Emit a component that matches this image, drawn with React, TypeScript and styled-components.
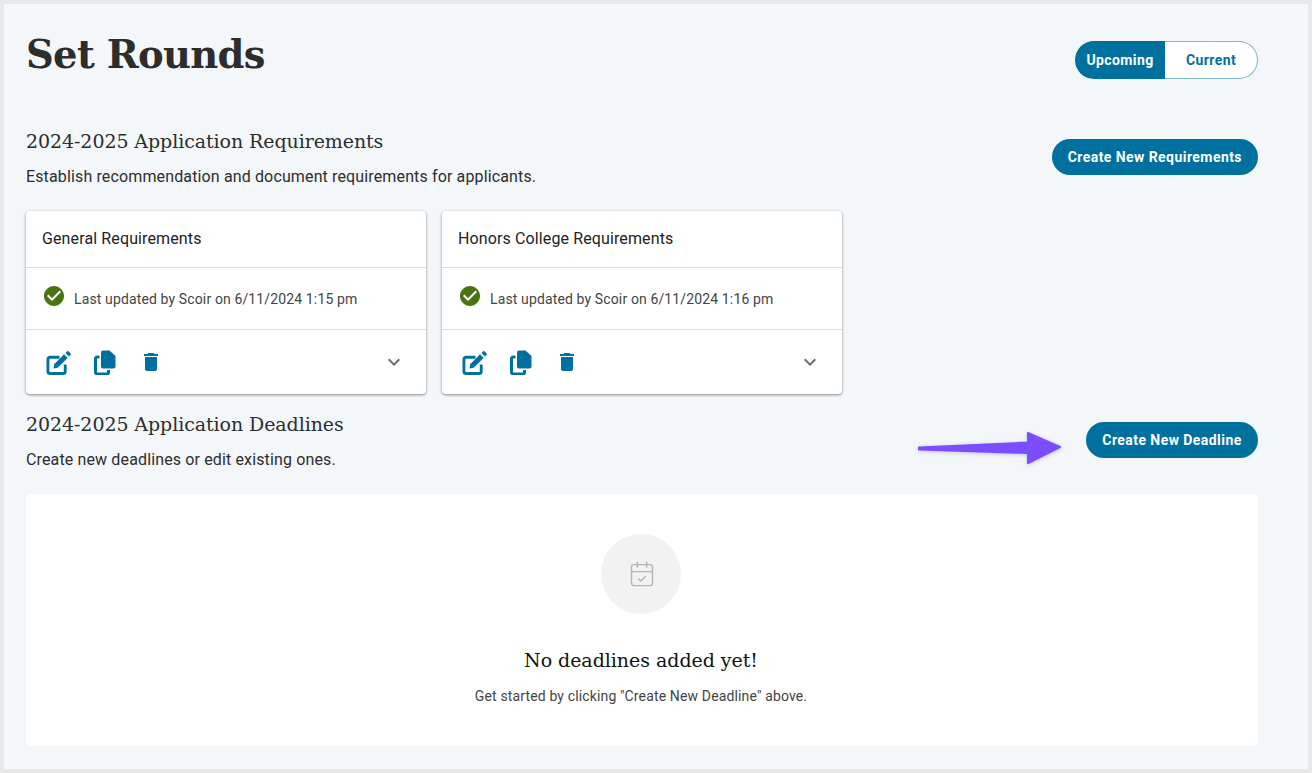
import React from 'react';
import styled, { createGlobalStyle } from 'styled-components';
import { MdDelete, MdCheckCircle, MdExpandMore } from 'react-icons/md';
import { CalendarCheck } from 'lucide-react';

const Global = createGlobalStyle`
  html, body { margin: 0; padding: 0; background: #e8e8e8; }
  body { font-family: Roboto, "Liberation Sans", sans-serif; }
  * { box-sizing: border-box; }
`;

const Frame = styled.div`
  width: 1312px;
  height: 773px;
  padding: 4px;
  background: #e8e8e8;
  overflow: hidden;
`;
const Page = styled.main`
  height: 765px;
  background: #f3f7fa;
  padding: 26px 50px 0 22px;
`;
const TopRow = styled.div`
  display: flex;
  justify-content: space-between;
  align-items: flex-start;
  height: 87px;
`;
const Title = styled.h1`
  margin: 0;
  font-family: "DejaVu Serif", serif;
  font-weight: 700;
  font-size: 38.5px;
  line-height: 50px;
  letter-spacing: -0.7px;
  color: #2d2d2d;
`;
const Toggle = styled.div`
  display: flex;
  width: 183px;
  height: 38px;
  margin-top: 11px;
`;
const ToggleItem = styled.div<{ $active?: boolean }>`
  flex: ${p => (p.$active ? '0 0 90px' : '1')};
  display: flex;
  align-items: center;
  justify-content: center;
  font-size: 14px;
  font-weight: 700;
  letter-spacing: 0.4px;
  background: ${p => (p.$active ? '#00719f' : '#fff')};
  color: ${p => (p.$active ? '#fff' : '#00719f')};
  border: ${p => (p.$active ? '0' : '1px solid #7fb5cf')};
  border-left: 0;
  border-radius: ${p => (p.$active ? '19px 0 0 19px' : '0 19px 19px 0')};
`;
const SectionRow = styled.section<{ $h: number }>`
  display: flex;
  justify-content: space-between;
  align-items: center;
  height: ${p => p.$h}px;
`;
const SectionTitle = styled.h2`
  margin: 0 0 13px;
  font-family: "DejaVu Serif", serif;
  font-weight: 400;
  font-size: 19px;
  line-height: 26px;
  letter-spacing: -0.08px;
  color: #2d2d2d;
`;
const SectionText = styled.p`
  margin: 0;
  font-size: 16px;
  line-height: 20px;
  letter-spacing: 0.135px;
  color: #2d2d2d;
`;
const PrimaryButton = styled.button`
  height: 36px;
  padding: 0 16px;
  border: 0;
  border-radius: 18px;
  background: #00719f;
  color: #fff;
  font-family: Roboto, sans-serif;
  font-size: 14px;
  font-weight: 700;
  letter-spacing: 0.44px;
`;
const DeadlineButton = styled(PrimaryButton)`
  width: 172px;
  padding: 0;
`;
const Cards = styled.div`
  display: flex;
  gap: 16px;
  margin-top: 14px;
`;
const Card = styled.article`
  width: 400px;
  height: 183px;
  background: #fff;
  border-radius: 4px;
  box-shadow: 0 1px 3px rgba(0,0,0,.45);
  display: flex;
  flex-direction: column;
`;
const CardHead = styled.div`
  height: 57px;
  padding: 0 16px 2px;
  display: flex;
  align-items: center;
  font-size: 16px;
  letter-spacing: 0.12px;
  color: #222;
  border-bottom: 1px solid #dcdfe2;
`;
const CardBody = styled.div`
  height: 62px;
  padding: 0 16px;
  display: flex;
  align-items: center;
  gap: 8px;
  font-size: 14px;
  letter-spacing: 0.13px;
  color: #444;
  border-bottom: 1px solid #dcdfe2;
  svg { color: #4a7311; margin-top: -6px; flex: none; }
`;
const CardActions = styled.div`
  flex: 1;
  display: flex;
  align-items: center;
  padding: 0 20px 0 20px;
  color: #00719f;
`;
const IconSlot = styled.span<{ $w: number }>`
  width: ${p => p.$w}px;
  display: flex;
`;
const Chevron = styled.span`
  margin-left: auto;
  display: flex;
  color: #6b6b6b;
`;
const Empty = styled.section`
  margin-top: 8px;
  height: 252px;
  background: #fff;
  border-radius: 4px;
  display: flex;
  flex-direction: column;
  align-items: center;
  padding: 40px 2px 0 0;
`;
const EmptyCircle = styled.div`
  width: 80px;
  height: 80px;
  border-radius: 50%;
  background: #f2f2f2;
  color: #b5b5b5;
  display: flex;
  align-items: center;
  justify-content: center;
  svg { margin-left: 1px; }
`;
const EmptyTitle = styled.h3`
  margin: 33px 0 0;
  font-family: "DejaVu Serif", serif;
  font-weight: 400;
  font-size: 19px;
  line-height: 26px;
  letter-spacing: -0.04px;
  color: #111;
`;
const EmptyText = styled.p`
  margin: 14px 0 0;
  font-size: 14px;
  line-height: 18px;
  letter-spacing: 0.14px;
  color: #444;
`;
const ArrowWrap = styled.div`
  position: relative;
  margin-left: auto;
  display: flex;
  align-items: center;
  svg { position: absolute; left: -170px; top: 8px; overflow: visible; filter: drop-shadow(0 1px 2px rgba(60,40,140,.25)); }
`;

const EditIcon = () => (
  <svg width="25" height="25" viewBox="0 0 26 26" fill="none">
    <path d="M14 7.5H4.5A2.5 2.5 0 0 0 2 10v12a2.5 2.5 0 0 0 2.5 2.5h13A2.5 2.5 0 0 0 20 22v-7" stroke="currentColor" strokeWidth="3" />
    <path d="M8.5 14.8 18.8 4.5l3.7 3.7L12.2 18.5l-4.4.8Z" fill="currentColor" />
    <path d="M20.2 3.1l1.5-1.5a1.4 1.4 0 0 1 2 0l1.7 1.7a1.4 1.4 0 0 1 0 2L23.9 6.8Z" fill="currentColor" />
  </svg>
);
const CopyIcon = () => (
  <svg width="22" height="25" viewBox="0 0 22 25" fill="none">
    <path d="M5.5 7H3.2A1.7 1.7 0 0 0 1.5 8.7v13.6A1.7 1.7 0 0 0 3.2 24h9.6a1.7 1.7 0 0 0 1.7-1.7V20" stroke="currentColor" strokeWidth="3" />
    <path d="M9 0.5h6.5L21.5 6v10.5a2 2 0 0 1-2 2H9a2 2 0 0 1-2-2v-14a2 2 0 0 1 2-2Z" fill="currentColor" />
  </svg>
);

const Requirement = ({ title, date }: { title: string; date: string }) => (
  <Card>
    <CardHead>{title}</CardHead>
    <CardBody>
      <MdCheckCircle size={24} />
      <span>Last updated by Scoir on {date}</span>
    </CardBody>
    <CardActions>
      <IconSlot $w={48}><EditIcon /></IconSlot>
      <IconSlot $w={45}><CopyIcon /></IconSlot>
      <IconSlot $w={24}><MdDelete size={24} /></IconSlot>
      <Chevron><MdExpandMore size={24} /></Chevron>
    </CardActions>
  </Card>
);

export default function App() {
  return (
    <Frame>
      <Global />
      <Page>
        <TopRow>
          <Title>Set Rounds</Title>
          <Toggle>
            <ToggleItem $active>Upcoming</ToggleItem>
            <ToggleItem>Current</ToggleItem>
          </Toggle>
        </TopRow>
        <SectionRow $h={80}>
          <div>
            <SectionTitle>2024-2025 Application Requirements</SectionTitle>
            <SectionText>Establish recommendation and document requirements for applicants.</SectionText>
          </div>
          <PrimaryButton>Create New Requirements</PrimaryButton>
        </SectionRow>
        <Cards>
          <Requirement title="General Requirements" date="6/11/2024 1:15 pm" />
          <Requirement title="Honors College Requirements" date="6/11/2024 1:16 pm" />
        </Cards>
        <SectionRow $h={92}>
          <div>
            <SectionTitle>2024-2025 Application Deadlines</SectionTitle>
            <SectionText>Create new deadlines or edit existing ones.</SectionText>
          </div>
          <ArrowWrap>
            <svg width="146" height="36" viewBox="0 0 146 36">
              <path d="M3 17.5 L112 12.5 L112 3 L144 17 L112 33 L112 23 L3 19.5 Z" fill="#7c4dff" stroke="#7c4dff" strokeWidth="2" strokeLinejoin="round" />
            </svg>
            <DeadlineButton>Create New Deadline</DeadlineButton>
          </ArrowWrap>
        </SectionRow>
        <Empty>
          <EmptyCircle><CalendarCheck size={28} strokeWidth={1.2} /></EmptyCircle>
          <EmptyTitle>No deadlines added yet!</EmptyTitle>
          <EmptyText>Get started by clicking "Create New Deadline" above.</EmptyText>
        </Empty>
      </Page>
    </Frame>
  );
}
